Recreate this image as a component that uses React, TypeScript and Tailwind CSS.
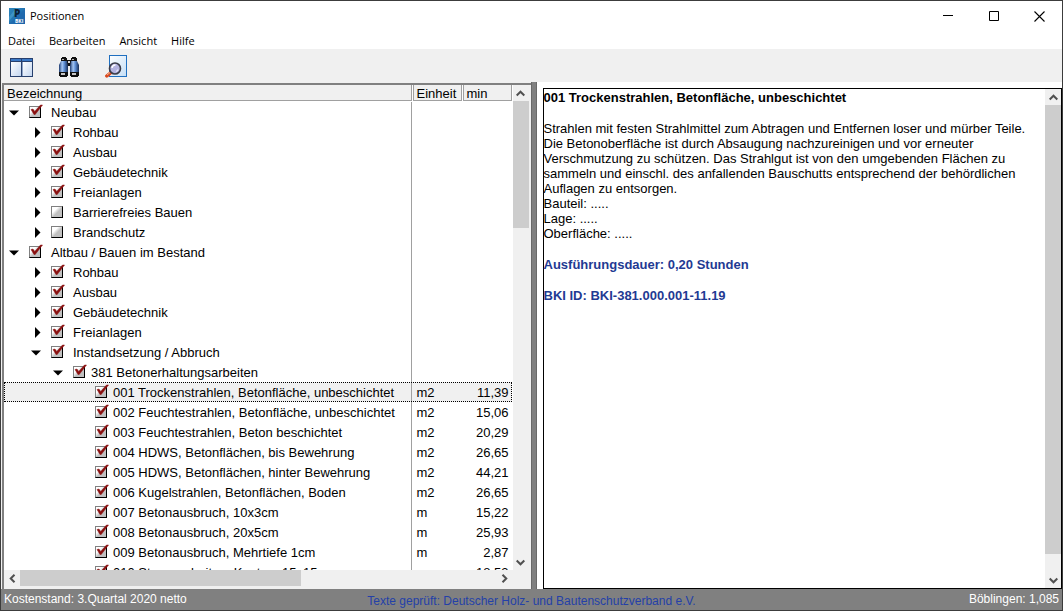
import { useState } from "react";

type Row = {
  id: string;
  level: number;
  label: string;
  open?: boolean;
  branch?: boolean;
  checked: boolean;
  unit?: string;
  min?: string;
};

const initialRows: Row[] = [
  { id: "n", level: 0, label: "Neubau", branch: true, open: true, checked: true },
  { id: "n1", level: 1, label: "Rohbau", branch: true, checked: true },
  { id: "n2", level: 1, label: "Ausbau", branch: true, checked: true },
  { id: "n3", level: 1, label: "Gebäudetechnik", branch: true, checked: true },
  { id: "n4", level: 1, label: "Freianlagen", branch: true, checked: true },
  { id: "n5", level: 1, label: "Barrierefreies Bauen", branch: true, checked: false },
  { id: "n6", level: 1, label: "Brandschutz", branch: true, checked: false },
  { id: "a", level: 0, label: "Altbau / Bauen im Bestand", branch: true, open: true, checked: true },
  { id: "a1", level: 1, label: "Rohbau", branch: true, checked: true },
  { id: "a2", level: 1, label: "Ausbau", branch: true, checked: true },
  { id: "a3", level: 1, label: "Gebäudetechnik", branch: true, checked: true },
  { id: "a4", level: 1, label: "Freianlagen", branch: true, checked: true },
  { id: "a5", level: 1, label: "Instandsetzung / Abbruch", branch: true, open: true, checked: true },
  { id: "381", level: 2, label: "381 Betonerhaltungsarbeiten", branch: true, open: true, checked: true },
  { id: "001", level: 3, label: "001 Trockenstrahlen, Betonfläche, unbeschichtet", checked: true, unit: "m2", min: "11,39" },
  { id: "002", level: 3, label: "002 Feuchtestrahlen, Betonfläche, unbeschichtet", checked: true, unit: "m2", min: "15,06" },
  { id: "003", level: 3, label: "003 Feuchtestrahlen, Beton beschichtet", checked: true, unit: "m2", min: "20,29" },
  { id: "004", level: 3, label: "004 HDWS, Betonflächen, bis Bewehrung", checked: true, unit: "m2", min: "26,65" },
  { id: "005", level: 3, label: "005 HDWS, Betonflächen, hinter Bewehrung", checked: true, unit: "m2", min: "44,21" },
  { id: "006", level: 3, label: "006 Kugelstrahlen, Betonflächen, Boden", checked: true, unit: "m2", min: "26,65" },
  { id: "007", level: 3, label: "007 Betonausbruch, 10x3cm", checked: true, unit: "m", min: "15,22" },
  { id: "008", level: 3, label: "008 Betonausbruch, 20x5cm", checked: true, unit: "m", min: "25,93" },
  { id: "009", level: 3, label: "009 Betonausbruch, Mehrtiefe 1cm", checked: true, unit: "m", min: "2,87" },
  { id: "010", level: 3, label: "010 Stemmarbeiten, Kanten, 15x15", checked: true, unit: "m", min: "18,53" },
];

const indent = ["pl-0", "pl-[22px]", "pl-[44px]", "pl-[66px]"];

function AppLogo() {
  return (
    <svg width="16" height="16" viewBox="0 0 16 16" aria-hidden="true">
      <defs>
        <linearGradient id="logo" x1="0" y1="0" x2="1" y2="1">
          <stop offset="0" stopColor="#2b86bd" />
          <stop offset="1" stopColor="#1c63a8" />
        </linearGradient>
      </defs>
      <rect width="16" height="16" fill="url(#logo)" />
      <path d="M0 16 16 1v15z" fill="#1f66ac" opacity=".6" />
      <path d="M0 9 7 0h4L0 13z" fill="#4fa3cf" opacity=".6" />
      <text x="5" y="9" fontSize="10" fontWeight="900" fill="#0c2238">P</text>
      <text x="6" y="15" fontSize="5" fontWeight="700" fill="#fff">BKI</text>
    </svg>
  );
}

function PanelsIcon() {
  return (
    <svg width="24" height="20" viewBox="0 0 24 20" aria-hidden="true">
      <defs>
        <linearGradient id="pane" x1="0" y1="0" x2="1" y2="1">
          <stop offset="0" stopColor="#fff" />
          <stop offset="1" stopColor="#c3d6f0" />
        </linearGradient>
      </defs>
      <rect x=".5" y="1.500" width="22" height="18" fill="#e4eefa" stroke="#27406e" />
      <rect x="1" y="2" width="21" height="2" fill="#3a78c6" />
      <path d="M1 4.500h21" stroke="#27406e" />
      <rect x="1" y="5" width="10" height="14" fill="url(#pane)" />
      <rect x="13" y="5" width="9" height="14" fill="url(#pane)" />
      <path d="M11.500 2v17" stroke="#27406e" />
      <path d="M12.500 5v14" stroke="#8ea4c8" />
    </svg>
  );
}

function BinocularsIcon() {
  return (
    <svg width="20" height="20" viewBox="0 0 20 20" aria-hidden="true">
      <defs>
        <linearGradient id="tube" x1="0" y1="0" x2="1" y2="0">
          <stop offset="0" stopColor="#1d3a70" />
          <stop offset=".35" stopColor="#a3c6f4" />
          <stop offset=".6" stopColor="#5c8cd2" />
          <stop offset="1" stopColor="#142a52" />
        </linearGradient>
      </defs>
      <rect x="8" y="3" width="4" height="6" fill="#111" />
      <rect x="9" y="4" width="2" height="2" fill="#ddd" />
      <path d="M2 4h6l1 5v7H0V8z" fill="url(#tube)" />
      <path d="M12 4h6l2 4v8h-9V9z" fill="url(#tube)" />
      <path d="M2 1h1V0h4v1h1v3H2zM12 1h1V0h4v1h1v3h-6z" fill="#111" />
      <path d="M3 2.500h2M13 2.500h2" stroke="#bbb" />
      <path d="M0 15h9v4H8v1H1v-1H0zM11 15h9v4h-1v1h-7v-1h-1z" fill="#0d0d0d" />
      <path d="M2 17h4M13 17h4" stroke="#c4c4c4" strokeWidth="2" />
    </svg>
  );
}

function PreviewIcon() {
  return (
    <svg width="22" height="23" viewBox="0 0 22 23" aria-hidden="true">
      <defs>
        <linearGradient id="sheet" x1="0" y1="0" x2="1" y2="1">
          <stop offset="0" stopColor="#fff" />
          <stop offset="1" stopColor="#c4def6" />
        </linearGradient>
      </defs>
      <rect x="4.500" y=".5" width="17" height="21" fill="url(#sheet)" stroke="#1f6fc0" />
      <path d="M5.500 18 1.800 21" stroke="#d8491f" strokeWidth="3.400" strokeLinecap="round" />
      <path d="m5 17.500-3 2.500" stroke="#f6b28e" />
      <circle cx="10" cy="13.500" r="5.500" fill="#b4b3e0" stroke="#3a3c48" strokeWidth="1.600" />
      <path d="M7 13a3.500 3.500 0 0 1 3.500-3" stroke="#fff" strokeWidth="1.500" fill="none" />
      <path d="M13 14.500a3 3 0 0 1-2 2" stroke="#e6e6fa" strokeWidth="1.200" fill="none" />
    </svg>
  );
}

function Chevron({ d }: { d: string }) {
  return (
    <svg width="9" height="9" viewBox="0 0 9 9" aria-hidden="true">
      <path d={d} fill="none" stroke="#505050" strokeWidth="2" />
    </svg>
  );
}

const UP = "M.7 6.500 4.500 2.700 8.300 6.500";
const DOWN = "M.7 2.500 4.500 6.300 8.300 2.500";
const LEFT = "M6.500 .7 2.700 4.500 6.500 8.300";
const RIGHT = "M2.500 .7 6.300 4.500 2.500 8.300";

function Tick({ row, onToggle }: { row: Row; onToggle: () => void }) {
  return (
    <span className="relative h-3 w-3 shrink-0">
      <input
        id={"pos-" + row.id}
        type="checkbox"
        checked={row.checked}
        onChange={onToggle}
        className="peer block h-3 w-3 appearance-none border border-t-[#808080] border-r-black border-b-black border-l-[#808080] bg-linear-to-br from-white from-30% to-[#c0c0c0] to-55%"
      />
      <svg
        className="pointer-events-none absolute bottom-0 left-0 hidden peer-checked:block"
        width="14"
        height="14"
        viewBox="0 0 14 14"
        aria-hidden="true"
      >
        <path d="M2 5.500 4 5l1.700 2.500L11.500 1h2L6.200 10.500H5z" fill="#8a1010" stroke="#8a1010" strokeWidth=".5" />
      </svg>
    </span>
  );
}

export default function App() {
  const [rows, setRows] = useState(initialRows);
  const [selected, setSelected] = useState("001");

  const toggle = (id: string) =>
    setRows(rows.map((r) => (r.id === id ? { ...r, checked: !r.checked } : r)));

  return (
    <div className="flex h-screen flex-col overflow-hidden bg-[#3c3c3c] p-px font-['Liberation_Sans',Arial,sans-serif] text-[13px] text-black">
      <header className="flex h-[30px] shrink-0 items-center bg-white pl-2 font-['Open_Sans','Segoe_UI',sans-serif]">
        <AppLogo />
        <h1 className="ml-[5px] flex-1 text-[11px]">Positionen</h1>
        <button aria-label="Minimieren" className="flex h-full w-[46px] items-center justify-center">
          <svg width="10" height="11" aria-hidden="true"><path d="M0 4.500h10" stroke="#000" /></svg>
        </button>
        <button aria-label="Maximieren" className="flex h-full w-[45px] items-center justify-center">
          <svg width="10" height="10" aria-hidden="true"><path d="M.5.5h9v9h-9z" fill="none" stroke="#000" /></svg>
        </button>
        <button aria-label="Schließen" className="flex h-full w-[46px] items-center justify-center">
          <svg width="11" height="11" aria-hidden="true"><path d="m.5.5 10 10M10.500.5l-10 10" stroke="#000" strokeWidth="1.100" /></svg>
        </button>
      </header>

      <nav className="flex h-[18px] shrink-0 items-center gap-[14px] bg-white pt-[2px] pl-[7px] font-['Open_Sans','Segoe_UI',sans-serif] text-[11px]">
        <button>Datei</button>
        <button>Bearbeiten</button>
        <button>Ansicht</button>
        <button>Hilfe</button>
      </nav>

      <div className="flex h-[33px] shrink-0 items-center bg-[#f0f0f0] pt-[2px] pl-[9px]">
        <button aria-label="Fensteraufteilung" className="mr-[25px]"><PanelsIcon /></button>
        <button aria-label="Suchen" className="mr-[26px]"><BinocularsIcon /></button>
        <button aria-label="Vorschau"><PreviewIcon /></button>
      </div>

      <main className="flex min-h-0 flex-1 bg-white">
        <section className="flex w-[calc(50%-1px)] shrink-0 flex-col bg-[#f0f0f0] pt-px pl-px">
          <div className="flex min-h-0 flex-1 flex-col border-t-2 border-l-2 border-[#808080] pr-[2px] pb-[3px]">
            <div className="flex min-h-0 flex-1">
              <div className="min-w-0 flex-1 overflow-hidden bg-white pr-px">
                <table className="w-full table-fixed border-separate border-spacing-0">
                  <colgroup>
                    <col />
                    <col className="w-[50px]" />
                    <col className="w-[50px]" />
                  </colgroup>
                  <thead>
                    <tr className="h-[17px] text-left leading-[17px]">
                      <th className="pb-px font-normal">
                        <div className="h-4 border-r border-b border-[#a0a0a0] bg-[#f0f0f0] pl-[3px]">Bezeichnung</div>
                      </th>
                      <th className="pb-px pl-px font-normal">
                        <div className="h-4 border-x border-b border-[#a0a0a0] bg-[#f0f0f0] pl-[3px]">Einheit</div>
                      </th>
                      <th className="pb-px pl-px font-normal">
                        <div className="h-4 border-x border-b border-[#a0a0a0] bg-[#f0f0f0] pl-[3px]">min</div>
                      </th>
                    </tr>
                  </thead>
                  <tbody>
                    {rows.map((r) => (
                      <tr
                        key={r.id}
                        onClick={() => setSelected(r.id)}
                        className={
                          r.id === selected
                            ? "h-5 bg-[#f0f0f0] outline-1 -outline-offset-1 outline-dotted outline-black"
                            : "h-5"
                        }
                      >
                        <td className="border-r border-[#a0a0a0] p-0">
                          <div className={"flex h-5 items-center " + indent[r.level]}>
                            {r.branch ? (
                              <button aria-label={r.label} className="flex h-5 w-[19px] shrink-0 items-center justify-center">
                                <svg width="10" height="11" aria-hidden="true">
                                  <path d={r.open ? "M0 3.500h10l-5 5z" : "M4 0v11l5.500-5.500z"} />
                                </svg>
                              </button>
                            ) : (
                              <span className="w-[19px] shrink-0" />
                            )}
                            <span className="w-[6px] shrink-0" />
                            <Tick row={r} onToggle={() => toggle(r.id)} />
                            <label
                              htmlFor={"pos-" + r.id}
                              className={
                                r.level < 2
                                  ? "pt-[2px] pl-[10px] leading-[18px] whitespace-nowrap"
                                  : "pt-[2px] pl-[6px] leading-[18px] whitespace-nowrap"
                              }
                            >
                              {r.label}
                            </label>
                          </div>
                        </td>
                        <td className="p-0 pt-[2px] pl-[5px] leading-[18px]">{r.unit}</td>
                        <td className="p-0 pt-[2px] pr-[3px] text-right leading-[18px]">{r.min}</td>
                      </tr>
                    ))}
                  </tbody>
                </table>
              </div>
              <div className="flex w-4 shrink-0 flex-col bg-[#f0f0f0]">
                <button aria-label="Nach oben" className="flex h-4 items-center justify-center"><Chevron d={UP} /></button>
                <div className="flex-1">
                  <div className="h-[28%] bg-[#cdcdcd]" />
                </div>
                <button aria-label="Nach unten" className="flex h-4 items-center justify-center"><Chevron d={DOWN} /></button>
              </div>
            </div>
            <div className="flex h-4 shrink-0 pr-4">
              <button aria-label="Nach links" className="flex w-4 items-center justify-center"><Chevron d={LEFT} /></button>
              <div className="flex-1">
                <div className="h-full w-[59%] bg-[#cdcdcd]" />
              </div>
              <button aria-label="Nach rechts" className="flex w-4 items-center justify-center"><Chevron d={RIGHT} /></button>
            </div>
          </div>
        </section>

        <div className="w-[6px] shrink-0 cursor-col-resize border-x border-[#696969] bg-[#808080]" />

        <section className="flex min-w-0 flex-1 pt-[6px] pl-[6px]">
          <div className="flex min-w-0 flex-1 border border-black">
            <article className="min-w-0 flex-1 pt-px leading-[15px]">
              <h2 className="mb-4 font-bold">001 Trockenstrahlen, Betonfläche, unbeschichtet</h2>
              <p>
                Strahlen mit festen Strahlmittel zum Abtragen und Entfernen loser und mürber Teile.
                Die Betonoberfläche ist durch Absaugung nachzureinigen und vor erneuter
                Verschmutzung zu schützen. Das Strahlgut ist von den umgebenden Flächen zu
                sammeln und einschl. des anfallenden Bauschutts entsprechend der behördlichen
                Auflagen zu entsorgen.
              </p>
              <p>Bauteil: .....</p>
              <p>Lage: .....</p>
              <p className="mb-4">Oberfläche: .....</p>
              <p className="mb-4 font-bold text-[#1f3a93]">Ausführungsdauer: 0,20 Stunden</p>
              <p className="font-bold text-[#1f3a93]">BKI ID: BKI-381.000.001-11.19</p>
            </article>
            <div className="flex w-4 shrink-0 flex-col bg-[#f0f0f0]">
              <button aria-label="Nach oben" className="flex h-4 items-center justify-center"><Chevron d={UP} /></button>
              <div className="flex-1 pb-[18px]">
                <div className="h-full bg-[#cdcdcd]" />
              </div>
              <button aria-label="Nach unten" className="flex h-4 items-center justify-center"><Chevron d={DOWN} /></button>
            </div>
          </div>
        </section>
      </main>

      <footer className="grid h-[21px] shrink-0 grid-cols-[1fr_auto_1fr] bg-[#808080] px-[3px] text-[12px] leading-5 text-white">
        <span>Kostenstand: 3.Quartal 2020 netto</span>
        <span className="pt-[2px] text-[#2440a8]">Texte geprüft: Deutscher Holz- und Bautenschutzverband e.V.</span>
        <span className="text-right">Böblingen: 1,085</span>
      </footer>
    </div>
  );
}
